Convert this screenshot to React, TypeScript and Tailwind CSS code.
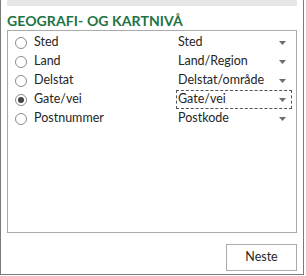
const rows = [
  { label: "Sted", value: "Sted" },
  { label: "Land", value: "Land/Region" },
  { label: "Delstat", value: "Delstat/område" },
  { label: "Gate/vei", value: "Gate/vei", selected: true },
  { label: "Postnummer", value: "Postkode" },
];

function Arrow() {
  return (
    <svg width="7" height="4" viewBox="0 0 7 4" className="shrink-0">
      <path d="M0 0h7L3.5 4z" fill="#6d6d6d" />
    </svg>
  );
}

function Radio({ checked }: { checked?: boolean }) {
  return (
    <span className="w-[12px] h-[12px] rounded-full border border-[#8c8c8c] bg-white flex items-center justify-center shrink-0">
      {checked && <span className="w-[6px] h-[6px] rounded-full bg-[#444444]" />}
    </span>
  );
}

export default function App() {
  return (
    <div
      className="w-[306px] h-[276px] bg-white text-[#262626] text-[12.5px]"
      style={{ fontFamily: 'Lato, "Open Sans", sans-serif' }}
    >
      <div className="w-[304px] h-[275px] border-l border-r border-b border-[#7a7a7a] flex flex-col px-[6px]">
        <div className="h-[6px] bg-[#e6e6e6] shrink-0" />
        <div className="mt-[6px] h-[18px] text-[14px] font-bold text-[#217346] leading-[18px] tracking-[0.1px]">
          GEOGRAFI- OG KARTNIVÅ
        </div>
        <div className="h-[203px] border border-[#ababab] pt-[2px]">
          {rows.map((r) => (
            <div key={r.label} className="h-[19px] flex items-center">
              <div className="w-[168px] flex items-center pl-[7px] gap-[7px]">
                <Radio checked={r.selected} />
                <span className="leading-none">{r.label}</span>
              </div>
              <div
                className={
                  "w-[116px] h-[19px] flex items-center justify-between pl-[1px] pr-[5px] " +
                  (r.selected ? "border border-dashed border-[#555555]" : "border border-transparent")
                }
              >
                <span className="leading-none">{r.value}</span>
                <Arrow />
              </div>
            </div>
          ))}
        </div>
        <div className="flex justify-end mt-[11px]">
          <button className="w-[71px] h-[27px] border border-[#ababab] bg-white text-[12.5px] text-[#262626]">
            Neste
          </button>
        </div>
      </div>
    </div>
  );
}
